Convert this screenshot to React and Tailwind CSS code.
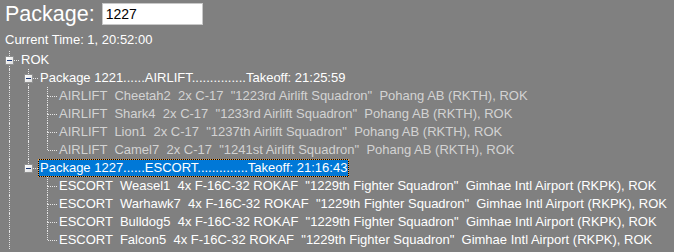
const ROWS = [
  { level: 0, lines: [], last: false, open: true, label: "ROK", color: "text-white" },
  { level: 1, lines: [true], last: false, open: true, label: "Package 1221......AIRLIFT...............Takeoff: 21:25:59", color: "text-white" },
  { level: 2, lines: [true, true], last: false, label: 'AIRLIFT  Cheetah2  2x C-17  "1223rd Airlift Squadron"  Pohang AB (RKTH), ROK', color: "text-[#d3d3d3]" },
  { level: 2, lines: [true, true], last: false, label: 'AIRLIFT  Shark4  2x C-17  "1233rd Airlift Squadron"  Pohang AB (RKTH), ROK', color: "text-[#d3d3d3]" },
  { level: 2, lines: [true, true], last: false, label: 'AIRLIFT  Lion1  2x C-17  "1237th Airlift Squadron"  Pohang AB (RKTH), ROK', color: "text-[#d3d3d3]" },
  { level: 2, lines: [true, true], last: true, label: 'AIRLIFT  Camel7  2x C-17  "1241st Airlift Squadron"  Pohang AB (RKTH), ROK', color: "text-[#d3d3d3]" },
  { level: 1, lines: [true], last: true, open: true, selected: true, label: "Package 1227......ESCORT..............Takeoff: 21:16:43", color: "text-white" },
  { level: 2, lines: [true, false], last: false, label: 'ESCORT  Weasel1  4x F-16C-32 ROKAF  "1229th Fighter Squadron"  Gimhae Intl Airport (RKPK), ROK', color: "text-white" },
  { level: 2, lines: [true, false], last: false, label: 'ESCORT  Warhawk7  4x F-16C-32 ROKAF  "1229th Fighter Squadron"  Gimhae Intl Airport (RKPK), ROK', color: "text-white" },
  { level: 2, lines: [true, false], last: false, label: 'ESCORT  Bulldog5  4x F-16C-32 ROKAF  "1229th Fighter Squadron"  Gimhae Intl Airport (RKPK), ROK', color: "text-white" },
  { level: 2, lines: [true, false], last: true, label: 'ESCORT  Falcon5  4x F-16C-32 ROKAF  "1229th Fighter Squadron"  Gimhae Intl Airport (RKPK), ROK', color: "text-white" },
];

function TreeRow({ row }) {
  return (
    <div className="flex h-[18px] items-center">
      {/* ancestor lines */}
      {row.lines.map((on, i) => (
        <div key={i} className="relative h-full w-[19px] shrink-0">
          {on && (
            <div className="absolute top-0 bottom-0 left-[9px] border-l border-dotted border-[#e6e6e6]" />
          )}
        </div>
      ))}
      {/* connector */}
      <div className="relative h-full w-[19px] shrink-0">
        <div className="absolute top-0 left-[9px] h-[9px] border-l border-dotted border-[#e6e6e6]" />
        {!row.last && (
          <div className="absolute top-[9px] bottom-0 left-[9px] border-l border-dotted border-[#e6e6e6]" />
        )}
        <div className="absolute top-[9px] left-[10px] right-0 border-t border-dotted border-[#e6e6e6]" />
        {row.open && (
          <div className="absolute top-[5px] left-[5px] flex h-[9px] w-[9px] items-center justify-center border border-[#8e8f8f] bg-gradient-to-br from-white to-[#dcdcdc]">
            <div className="h-[1px] w-[5px] bg-[#1f3c7a]" />
          </div>
        )}
      </div>
      {row.selected ? (
        <span className="h-[18px] border border-dotted border-[#f0a040] bg-black">
          <span className="block h-[16px] bg-[#0078d7] px-[1px] text-[13px] leading-[16px] whitespace-pre text-white">
            {row.label}
          </span>
        </span>
      ) : (
        <span
          className={`h-[18px] border border-transparent px-[1px] text-[13px] leading-[16px] whitespace-pre ${row.color}`}
        >
          {row.label}
        </span>
      )}
    </div>
  );
}

export default function App() {
  return (
    <div className="h-[252px] w-[674px] overflow-hidden bg-[#808080] font-['Liberation_Sans',Arial,sans-serif]">
      <div className="flex h-[28px] items-center pl-[5px]">
        <span className="text-[21.5px] leading-[24px] text-white">Package:</span>
        <input
          defaultValue="1227"
          className="ml-[7px] h-[22px] w-[101px] border border-[#c8c8c8] bg-white px-[3px] text-[14px] text-black outline-none"
        />
      </div>
      <div className="h-[23px] pt-[4px] pl-[5px] text-[13px] leading-[15px] text-white">
        Current Time: 1, 20:52:00
      </div>
      <div>
        {ROWS.map((row, i) => (
          <TreeRow key={i} row={row} />
        ))}
      </div>
    </div>
  );
}
